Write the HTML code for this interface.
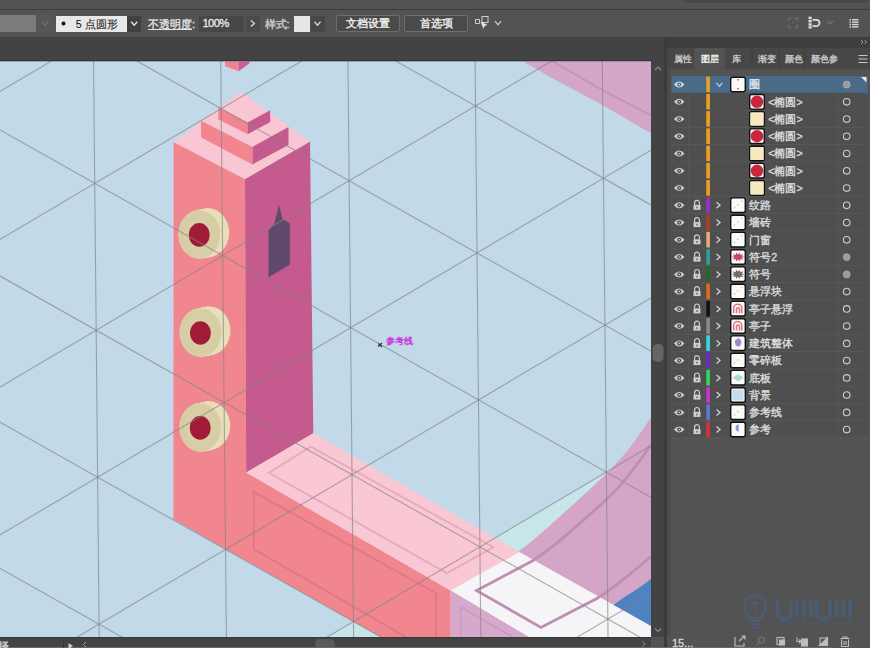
<!DOCTYPE html>
<html><head><meta charset="utf-8">
<style>
*{margin:0;padding:0;box-sizing:border-box}
html,body{width:870px;height:648px;overflow:hidden;background:#535353;font-family:"Liberation Sans",sans-serif;}
.a{position:absolute}
.t{position:absolute;white-space:nowrap;color:#e0e0e0;font-size:11px;line-height:1;-webkit-text-stroke:0.35px currentColor}
</style></head><body>
<div class="a" style="left:0;top:0;width:870px;height:9px;background:#535353"></div>
<div class="a" style="left:0;top:9px;width:870px;height:1px;background:#3c3c3c"></div>
<div class="a" style="left:0;top:10px;width:870px;height:27px;background:#535353"></div>
<div class="a" style="left:0;top:37px;width:870px;height:24px;background:#434343"></div>

<svg width="870" height="648" style="position:absolute;left:0;top:0">
<defs><clipPath id="cv"><rect x="0" y="61" width="651" height="576"/></clipPath></defs>
<g clip-path="url(#cv)">
<rect x="0" y="61" width="651" height="576" fill="#c1d9e8"/>
<polygon fill="#c6e6e9" points="327.4,637 651,445.7 651,637"/>
<path fill="#d4a5c7" d="M651,417.3 C640,434 635,441 628.4,449.4 C620,459 614,466 608.6,471.6 C597,483 586,493 574.1,503.7 C566,511 558,518 549.4,525.9 C540,534 530,543 519.8,550.6 L470,600 L470,637 L590,637 L613.6,604.7 C625,596 640,588 651,578.8 Z"/>
<path fill="#4f82c0" d="M613.6,604.7 C625,596 640,588 651,578.8 L651,637 L590,637 Z"/>
<path fill="#d4a5c7" d="M523.1,61.5 L555.6,79.9 L602.8,105.2 L650.4,133 L651,133 L651,61.5 Z"/>
<path fill="none" stroke="#c595b8" stroke-width="2" d="M552.8,61.5 L602.8,90.4 L651,115.4"/>
<polygon fill="#f3828f" points="224.9,61.5 225.2,66.3 238.7,71.2 238.7,61.5"/>
<polygon fill="#cf5c93" points="238.7,61.5 238.7,71.2 249.1,63.5 249.7,61.5"/>
<polygon fill="#f1868f" points="173.6,141.9 245,179 246.2,472.5 450.6,590.6 450.6,637 380.7,637 173.4,519.3"/>
<polygon fill="#c55a8f" points="245,179 310,141.5 313.3,433.2 246.2,472.5"/>
<polygon fill="#f9c6d3" points="173.6,141.9 240.8,91.7 310,141.5 245,179"/>
<polygon fill="#f1868f" points="201.1,120.7 201.1,137.4 252.5,164.4 252.5,146.9"/>
<polygon fill="#c55a8f" points="252.5,146.9 288.5,126.9 288.5,145 252.5,164.4"/>
<polygon fill="#f1868f" points="218.3,107.4 218.3,119.3 247.6,134.3 247.6,122.6"/>
<polygon fill="#c55a8f" points="247.6,122.6 270.2,110.2 270.2,122 247.6,134.3"/>
<ellipse cx="208.20" cy="232.60" rx="21.00" ry="24.30" fill="#e6dfb8"/><ellipse cx="207.45" cy="232.75" rx="21.00" ry="24.30" fill="#e6dfb8"/><ellipse cx="206.70" cy="232.90" rx="21.00" ry="24.30" fill="#e6dfb8"/><ellipse cx="205.95" cy="233.05" rx="21.00" ry="24.30" fill="#e6dfb8"/><ellipse cx="205.20" cy="233.20" rx="21.00" ry="24.30" fill="#e6dfb8"/><ellipse cx="204.45" cy="233.35" rx="21.00" ry="24.30" fill="#e6dfb8"/><ellipse cx="203.70" cy="233.50" rx="21.00" ry="24.30" fill="#e6dfb8"/><ellipse cx="202.95" cy="233.65" rx="21.00" ry="24.30" fill="#e6dfb8"/><ellipse cx="202.20" cy="233.80" rx="21.00" ry="24.30" fill="#e6dfb8"/><ellipse cx="201.45" cy="233.95" rx="21.00" ry="24.30" fill="#e6dfb8"/><ellipse cx="200.70" cy="234.10" rx="21.00" ry="24.30" fill="#e6dfb8"/><ellipse cx="199.95" cy="234.25" rx="21.00" ry="24.30" fill="#e6dfb8"/><ellipse cx="199.20" cy="234.40" rx="21.00" ry="24.30" fill="#d8cea6"/><ellipse cx="199.20" cy="234.40" rx="17.00" ry="20.30" fill="none" stroke="#cfc49c" stroke-width="1" opacity="0.35"/><ellipse cx="199.20" cy="234.90" rx="10.40" ry="11.80" fill="#9f1b37"/>
<ellipse cx="209.40" cy="330.70" rx="21.00" ry="24.30" fill="#e6dfb8"/><ellipse cx="208.65" cy="330.85" rx="21.00" ry="24.30" fill="#e6dfb8"/><ellipse cx="207.90" cy="331.00" rx="21.00" ry="24.30" fill="#e6dfb8"/><ellipse cx="207.15" cy="331.15" rx="21.00" ry="24.30" fill="#e6dfb8"/><ellipse cx="206.40" cy="331.30" rx="21.00" ry="24.30" fill="#e6dfb8"/><ellipse cx="205.65" cy="331.45" rx="21.00" ry="24.30" fill="#e6dfb8"/><ellipse cx="204.90" cy="331.60" rx="21.00" ry="24.30" fill="#e6dfb8"/><ellipse cx="204.15" cy="331.75" rx="21.00" ry="24.30" fill="#e6dfb8"/><ellipse cx="203.40" cy="331.90" rx="21.00" ry="24.30" fill="#e6dfb8"/><ellipse cx="202.65" cy="332.05" rx="21.00" ry="24.30" fill="#e6dfb8"/><ellipse cx="201.90" cy="332.20" rx="21.00" ry="24.30" fill="#e6dfb8"/><ellipse cx="201.15" cy="332.35" rx="21.00" ry="24.30" fill="#e6dfb8"/><ellipse cx="200.40" cy="332.50" rx="21.00" ry="24.30" fill="#d8cea6"/><ellipse cx="200.40" cy="332.50" rx="17.00" ry="20.30" fill="none" stroke="#cfc49c" stroke-width="1" opacity="0.35"/><ellipse cx="200.40" cy="333.00" rx="10.40" ry="11.80" fill="#9f1b37"/>
<ellipse cx="209.20" cy="425.60" rx="21.00" ry="24.30" fill="#e6dfb8"/><ellipse cx="208.45" cy="425.75" rx="21.00" ry="24.30" fill="#e6dfb8"/><ellipse cx="207.70" cy="425.90" rx="21.00" ry="24.30" fill="#e6dfb8"/><ellipse cx="206.95" cy="426.05" rx="21.00" ry="24.30" fill="#e6dfb8"/><ellipse cx="206.20" cy="426.20" rx="21.00" ry="24.30" fill="#e6dfb8"/><ellipse cx="205.45" cy="426.35" rx="21.00" ry="24.30" fill="#e6dfb8"/><ellipse cx="204.70" cy="426.50" rx="21.00" ry="24.30" fill="#e6dfb8"/><ellipse cx="203.95" cy="426.65" rx="21.00" ry="24.30" fill="#e6dfb8"/><ellipse cx="203.20" cy="426.80" rx="21.00" ry="24.30" fill="#e6dfb8"/><ellipse cx="202.45" cy="426.95" rx="21.00" ry="24.30" fill="#e6dfb8"/><ellipse cx="201.70" cy="427.10" rx="21.00" ry="24.30" fill="#e6dfb8"/><ellipse cx="200.95" cy="427.25" rx="21.00" ry="24.30" fill="#e6dfb8"/><ellipse cx="200.20" cy="427.40" rx="21.00" ry="24.30" fill="#d8cea6"/><ellipse cx="200.20" cy="427.40" rx="17.00" ry="20.30" fill="none" stroke="#cfc49c" stroke-width="1" opacity="0.35"/><ellipse cx="200.20" cy="427.90" rx="10.40" ry="11.80" fill="#9f1b37"/>
<polygon fill="#5f4a6b" points="279,204.7 282.4,219 289.8,223.2 289.8,264.8 268.5,277.2 268.5,230.4 274.4,223.2"/>
<polygon fill="#f9c8d4" points="246.2,472.5 313.3,433.2 519.5,552 450.6,590.6"/>
<polygon fill="none" stroke="#e6adbc" stroke-width="2" points="268.9,472.8 310.7,446.6 493.4,547.2 446.9,573.1"/>
<polyline fill="none" stroke="#dc7a86" stroke-width="2" points="406,637 253.8,549 253.8,492.1 435.9,593 435.9,637"/>
<polygon fill="#f5f4f7" points="450.6,590.6 519.5,552 651,626 651,637 528.7,637"/>
<polygon fill="#d6a9cc" points="450.6,590.6 528.7,637 450.6,637"/>
<polyline fill="none" stroke="#c898bd" stroke-width="1.5" points="460.7,637 460.7,607 513,637"/>
<path fill="none" stroke="#bf8db2" stroke-width="2.8" stroke-linejoin="miter" d="M651,556.5 C630,574 615,588 596,599 L540.9,627.4 L476.6,590.6 L533.6,560.2 C560,542 565,536 574,528.4 C595,510 612,496 623.5,481.5 C635,467 644,456 651,444.4"/>
<g stroke="#848484" stroke-opacity="0.68" stroke-width="1.1"><line x1="-164.0" y1="-255.0" x2="-153.9" y2="773.6"/><line x1="-36.9" y1="-256.3" x2="-26.7" y2="772.4"/><line x1="90.4" y1="-257.5" x2="100.5" y2="771.1"/><line x1="217.6" y1="-258.8" x2="227.7" y2="769.8"/><line x1="344.8" y1="-260.1" x2="354.9" y2="768.5"/><line x1="471.9" y1="-261.4" x2="482.1" y2="767.3"/><line x1="599.1" y1="-262.6" x2="609.3" y2="766.0"/><line x1="726.4" y1="-263.9" x2="736.5" y2="764.7"/><line x1="853.6" y1="-265.2" x2="863.7" y2="763.4"/><line x1="-300.7" y1="-1208.9" x2="978.6" y2="-486.9"/><line x1="-296.3" y1="-768.0" x2="968.4" y2="-1515.5"/><line x1="-299.2" y1="-1061.9" x2="980.0" y2="-339.9"/><line x1="-294.9" y1="-621.1" x2="969.9" y2="-1368.6"/><line x1="-297.8" y1="-915.0" x2="981.5" y2="-193.0"/><line x1="-293.4" y1="-474.1" x2="971.3" y2="-1221.6"/><line x1="-296.3" y1="-768.0" x2="982.9" y2="-46.1"/><line x1="-292.0" y1="-327.2" x2="972.8" y2="-1074.7"/><line x1="-294.9" y1="-621.1" x2="984.4" y2="100.9"/><line x1="-290.5" y1="-180.2" x2="974.2" y2="-927.8"/><line x1="-293.4" y1="-474.1" x2="985.8" y2="247.8"/><line x1="-289.1" y1="-33.3" x2="975.7" y2="-780.8"/><line x1="-292.0" y1="-327.2" x2="987.3" y2="394.8"/><line x1="-287.6" y1="113.7" x2="977.1" y2="-633.8"/><line x1="-290.5" y1="-180.2" x2="988.7" y2="541.8"/><line x1="-286.2" y1="260.6" x2="978.6" y2="-486.9"/><line x1="-289.1" y1="-33.3" x2="990.2" y2="688.7"/><line x1="-284.7" y1="407.6" x2="980.0" y2="-339.9"/><line x1="-287.6" y1="113.7" x2="991.6" y2="835.6"/><line x1="-283.3" y1="554.5" x2="981.5" y2="-193.0"/><line x1="-286.2" y1="260.6" x2="993.1" y2="982.6"/><line x1="-281.8" y1="701.5" x2="982.9" y2="-46.1"/><line x1="-284.7" y1="407.6" x2="994.5" y2="1129.5"/><line x1="-280.4" y1="848.4" x2="984.4" y2="100.9"/><line x1="-283.3" y1="554.5" x2="996.0" y2="1276.5"/><line x1="-278.9" y1="995.3" x2="985.8" y2="247.8"/><line x1="-281.8" y1="701.5" x2="997.4" y2="1423.4"/><line x1="-277.5" y1="1142.3" x2="987.3" y2="394.8"/><line x1="-280.4" y1="848.4" x2="998.9" y2="1570.4"/><line x1="-276.0" y1="1289.2" x2="988.7" y2="541.8"/><line x1="-278.9" y1="995.3" x2="1000.3" y2="1717.3"/><line x1="-274.6" y1="1436.2" x2="990.2" y2="688.7"/><line x1="-277.5" y1="1142.3" x2="1001.8" y2="1864.3"/><line x1="-273.1" y1="1583.1" x2="991.6" y2="835.6"/><line x1="-276.0" y1="1289.2" x2="1003.2" y2="2011.2"/><line x1="-271.7" y1="1730.1" x2="993.1" y2="982.6"/></g>
</g>
<rect x="0" y="60.3" width="652" height="1" fill="#382e33"/>
<rect x="651" y="60.3" width="1" height="577" fill="#382e33"/>
<text x="385.5" y="343.5" font-size="9.2" font-weight="bold" fill="#cf35dc" font-family="Liberation Sans, sans-serif">参考线</text>
<path d="M378.5,343.5 L382,347 M378,346.5 L382,343" stroke="#333" stroke-width="1.3"/>
</svg>


<div class="a" style="left:0;top:15px;width:36px;height:17px;background:#7c7c7c"></div>
<div class="a" style="left:36px;top:15px;width:19px;height:17px;background:#575757"></div>
<div class="a" style="left:56px;top:15.5px;width:71px;height:16.5px;background:#e8e8e8"></div>
<div class="a" style="left:127.4px;top:15.5px;width:13.6px;height:16.5px;background:#404040"></div>
<div class="a" style="left:199.2px;top:15.5px;width:45px;height:16.5px;background:#474747"></div>
<div class="a" style="left:246px;top:15.5px;width:13.5px;height:16.5px;background:#4a4a4a"></div>
<div class="a" style="left:294px;top:15.5px;width:16.2px;height:16.5px;background:#e6e6e6"></div>
<div class="a" style="left:310.5px;top:15.5px;width:14px;height:16.5px;background:#474747"></div>
<div class="a" style="left:335.5px;top:14.8px;width:64px;height:17px;border:1px solid #6e6e6e;border-radius:2px;background:#4a4a4a"></div>
<div class="a" style="left:404.3px;top:14.8px;width:63.3px;height:17px;border:1px solid #6e6e6e;border-radius:2px;background:#4a4a4a"></div>
<svg width="870" height="40" style="position:absolute;left:0;top:0">
<path d="M42.0,21.8 L45.0,25.2 L48.0,21.8" fill="none" stroke="#6e6e6e" stroke-width="1.3"/>
<circle cx="63.5" cy="23.5" r="2" fill="#111"/>
<path d="M131.2,21.8 L134.2,25.2 L137.2,21.8" fill="none" stroke="#e8e8e8" stroke-width="1.3"/>
<path d="M250.9,20.5 L254.4,23.5 L250.9,26.5" fill="none" stroke="#d8d8d8" stroke-width="1.3"/>
<path d="M314.5,21.8 L317.5,25.2 L320.5,21.8" fill="none" stroke="#d8d8d8" stroke-width="1.3"/>
<rect x="482" y="16.5" width="6" height="6" fill="none" stroke="#cfcfcf" stroke-width="1"/>
<path d="M475.5,19.5 h4 v4 h-4 z" fill="none" stroke="#cfcfcf" stroke-width="1"/>
<path d="M480.5,21.5 l7,3.5 l-3,1 l-1,3 z" fill="#e6e6e6"/>
<path d="M495.0,21.2 L498.0,24.8 L501.0,21.2" fill="none" stroke="#cfcfcf" stroke-width="1.3"/>
<path d="M788.5,21 v-3 h3 M794.5,18 h3 v3 M797.5,24.5 v3 h-3 M791.5,27.5 h-3 v-3" fill="none" stroke="#6a6a6a" stroke-width="1.6"/><rect x="792" y="21.5" width="2" height="2" fill="#606060"/>
<g fill="#e0e0e0"><rect x="808.5" y="16.7" width="3.2" height="2.4"/><rect x="808.5" y="20" width="3.2" height="2.4"/><rect x="808.5" y="23.3" width="3.2" height="2.4"/><rect x="808.5" y="26.3" width="3.2" height="2.2"/></g>
<path d="M812.5,19.8 h3.8 a3.2,3.2 0 0 1 0,6.4 h-3.8" fill="none" stroke="#e0e0e0" stroke-width="1.7"/>
<path d="M827.0,20.8 L830.0,24.2 L833.0,20.8" fill="none" stroke="#707070" stroke-width="1.3"/>
<g fill="#d8d8d8"><rect x="849.5" y="19" width="1.5" height="1.4"/><rect x="852" y="19" width="6.5" height="1.4"/><rect x="849.5" y="21.4" width="1.5" height="1.4"/><rect x="852" y="21.4" width="6.5" height="1.4"/><rect x="849.5" y="23.8" width="1.5" height="1.4"/><rect x="852" y="23.8" width="6.5" height="1.4"/><rect x="849.5" y="26.2" width="1.5" height="1.4"/><rect x="852" y="26.2" width="6.5" height="1.4"/></g>
</svg>
<div class="t" style="left:75.8px;top:18.6px;font-size:10.6px;color:#1a1a1a;-webkit-text-stroke:0.1px #1a1a1a">5 点圆形</div>
<div class="t" style="left:148px;top:18.5px;font-size:11px;color:#e2e2e2"><span style="text-decoration:underline">不透明度</span>:</div>
<div class="t" style="left:202.5px;top:17.5px;font-size:11.3px;letter-spacing:-0.7px;color:#e6e6e6">100%</div>
<div class="t" style="left:264.5px;top:18.5px;font-size:11px;color:#cfcfcf">样式:</div>
<div class="t" style="left:346px;top:18.3px;font-size:10.5px;color:#f0f0f0">文档设置</div>
<div class="t" style="left:419.5px;top:18.3px;font-size:10.5px;color:#f0f0f0">首选项</div>


<svg width="870" height="648" style="position:absolute;left:0;top:0">
<rect x="651" y="61" width="13" height="576" fill="#434343"/>
<rect x="652.5" y="344" width="11" height="18" rx="5" fill="#656565"/>
<path d="M655,70 L658,67 L661,70" fill="none" stroke="#8a8a8a" stroke-width="1.2"/>
<rect x="664" y="37" width="3" height="611" fill="#3b3b3b"/>
<rect x="667" y="37" width="203" height="11" fill="#3e3e3e"/>
<rect x="667" y="48" width="203" height="21.5" fill="#474747"/>
<rect x="694.2" y="48" width="31" height="21.5" fill="#535353"/>
<rect x="751.5" y="48" width="1" height="21.5" fill="#3f3f3f"/>
<rect x="778.5" y="48" width="1" height="21.5" fill="#3f3f3f"/>
<rect x="804.5" y="48" width="1" height="21.5" fill="#3f3f3f"/>
<rect x="667" y="69.5" width="203" height="578.5" fill="#535353"/>
<rect x="667" y="69.5" width="3.5" height="565" fill="#4a4a4a"/>
<rect x="684" y="0" width="184" height="2.8" fill="#484848"/>
<path d="M861,40 l2,2 l-2,2 M864.5,40 l2,2 l-2,2" fill="none" stroke="#aaa" stroke-width="0.9"/>
<path d="M858.5,55.5 h9 M858.5,59 h9 M858.5,62.5 h9" stroke="#c8c8c8" stroke-width="1.2"/>
<rect x="671.5" y="76.00" width="196" height="16.6" fill="#4a6a89"/><polygon points="861,77.0 866.5,77.0 866.5,82.5" fill="#e8e8e8"/><path d="M673.9,84.6 Q679.2,78.6 684.5,84.6 Q679.2,90.6 673.9,84.6 Z" fill="#d8dde2"/><circle cx="679.2" cy="84.6" r="2.1" fill="#4a6a89"/><circle cx="679.2" cy="84.6" r="0.8" fill="#d8dde2"/><rect x="706.3" y="76.60" width="3.6" height="15.6" fill="#f0a020"/><path d="M716.4,82.8 L719.4,86.3 L722.4,82.8" fill="none" stroke="#c8d4e0" stroke-width="1.3"/><rect x="730.7" y="77.2" width="14.6" height="14.6" rx="2" fill="#fbfaf8" stroke="#111" stroke-width="1.4"/><rect x="737.4" y="79.0" width="1.2" height="1.5" fill="#555"/><rect x="737.4" y="88.0" width="1.2" height="1.5" fill="#555"/><circle cx="846.7" cy="84.6" r="3.4" fill="#9a9a9a" stroke="#b5b5b5" stroke-width="0.8"/><rect x="671.5" y="93.25" width="196" height="16.6" fill="#4f4f4f"/><rect x="671.5" y="109.85" width="196" height="0.9" fill="#5b5b5b"/><rect x="688.3" y="93.25" width="0.8" height="16.6" fill="#585858"/><rect x="838.5" y="93.25" width="0.8" height="16.6" fill="#585858"/><path d="M673.9,101.8 Q679.2,95.8 684.5,101.8 Q679.2,107.8 673.9,101.8 Z" fill="#cfcfcf"/><circle cx="679.2" cy="101.8" r="2.1" fill="#4f4f4f"/><circle cx="679.2" cy="101.8" r="0.8" fill="#cfcfcf"/><rect x="706.3" y="93.85" width="3.6" height="15.6" fill="#f0a020"/><rect x="749.7" y="94.5" width="14.6" height="14.6" rx="2" fill="#fbfaf8" stroke="#111" stroke-width="1.4"/><circle cx="757.0" cy="101.8" r="6.2" fill="#c8253f"/><circle cx="846.7" cy="101.8" r="3.3" fill="none" stroke="#cdcdcd" stroke-width="1.1"/><rect x="671.5" y="110.50" width="196" height="16.6" fill="#4f4f4f"/><rect x="671.5" y="127.10" width="196" height="0.9" fill="#5b5b5b"/><rect x="688.3" y="110.50" width="0.8" height="16.6" fill="#585858"/><rect x="838.5" y="110.50" width="0.8" height="16.6" fill="#585858"/><path d="M673.9,119.1 Q679.2,113.1 684.5,119.1 Q679.2,125.1 673.9,119.1 Z" fill="#cfcfcf"/><circle cx="679.2" cy="119.1" r="2.1" fill="#4f4f4f"/><circle cx="679.2" cy="119.1" r="0.8" fill="#cfcfcf"/><rect x="706.3" y="111.10" width="3.6" height="15.6" fill="#f0a020"/><rect x="749.7" y="111.7" width="14.6" height="14.6" rx="2" fill="#fbfaf8" stroke="#111" stroke-width="1.4"/><rect x="750.5" y="112.5" width="13" height="13" fill="#f8eabf"/><circle cx="846.7" cy="119.1" r="3.3" fill="none" stroke="#cdcdcd" stroke-width="1.1"/><rect x="671.5" y="127.75" width="196" height="16.6" fill="#4f4f4f"/><rect x="671.5" y="144.35" width="196" height="0.9" fill="#5b5b5b"/><rect x="688.3" y="127.75" width="0.8" height="16.6" fill="#585858"/><rect x="838.5" y="127.75" width="0.8" height="16.6" fill="#585858"/><path d="M673.9,136.3 Q679.2,130.3 684.5,136.3 Q679.2,142.3 673.9,136.3 Z" fill="#cfcfcf"/><circle cx="679.2" cy="136.3" r="2.1" fill="#4f4f4f"/><circle cx="679.2" cy="136.3" r="0.8" fill="#cfcfcf"/><rect x="706.3" y="128.35" width="3.6" height="15.6" fill="#f0a020"/><rect x="749.7" y="128.9" width="14.6" height="14.6" rx="2" fill="#fbfaf8" stroke="#111" stroke-width="1.4"/><circle cx="757.0" cy="136.2" r="6.2" fill="#c8253f"/><circle cx="846.7" cy="136.3" r="3.3" fill="none" stroke="#cdcdcd" stroke-width="1.1"/><rect x="671.5" y="145.00" width="196" height="16.6" fill="#4f4f4f"/><rect x="671.5" y="161.60" width="196" height="0.9" fill="#5b5b5b"/><rect x="688.3" y="145.00" width="0.8" height="16.6" fill="#585858"/><rect x="838.5" y="145.00" width="0.8" height="16.6" fill="#585858"/><path d="M673.9,153.6 Q679.2,147.6 684.5,153.6 Q679.2,159.6 673.9,153.6 Z" fill="#cfcfcf"/><circle cx="679.2" cy="153.6" r="2.1" fill="#4f4f4f"/><circle cx="679.2" cy="153.6" r="0.8" fill="#cfcfcf"/><rect x="706.3" y="145.60" width="3.6" height="15.6" fill="#f0a020"/><rect x="749.7" y="146.2" width="14.6" height="14.6" rx="2" fill="#fbfaf8" stroke="#111" stroke-width="1.4"/><rect x="750.5" y="147.0" width="13" height="13" fill="#f8eabf"/><circle cx="846.7" cy="153.6" r="3.3" fill="none" stroke="#cdcdcd" stroke-width="1.1"/><rect x="671.5" y="162.25" width="196" height="16.6" fill="#4f4f4f"/><rect x="671.5" y="178.85" width="196" height="0.9" fill="#5b5b5b"/><rect x="688.3" y="162.25" width="0.8" height="16.6" fill="#585858"/><rect x="838.5" y="162.25" width="0.8" height="16.6" fill="#585858"/><path d="M673.9,170.8 Q679.2,164.8 684.5,170.8 Q679.2,176.8 673.9,170.8 Z" fill="#cfcfcf"/><circle cx="679.2" cy="170.8" r="2.1" fill="#4f4f4f"/><circle cx="679.2" cy="170.8" r="0.8" fill="#cfcfcf"/><rect x="706.3" y="162.85" width="3.6" height="15.6" fill="#f0a020"/><rect x="749.7" y="163.4" width="14.6" height="14.6" rx="2" fill="#fbfaf8" stroke="#111" stroke-width="1.4"/><circle cx="757.0" cy="170.8" r="6.2" fill="#c8253f"/><circle cx="846.7" cy="170.8" r="3.3" fill="none" stroke="#cdcdcd" stroke-width="1.1"/><rect x="671.5" y="179.50" width="196" height="16.6" fill="#4f4f4f"/><rect x="671.5" y="196.10" width="196" height="0.9" fill="#5b5b5b"/><rect x="688.3" y="179.50" width="0.8" height="16.6" fill="#585858"/><rect x="838.5" y="179.50" width="0.8" height="16.6" fill="#585858"/><path d="M673.9,188.1 Q679.2,182.1 684.5,188.1 Q679.2,194.1 673.9,188.1 Z" fill="#cfcfcf"/><circle cx="679.2" cy="188.1" r="2.1" fill="#4f4f4f"/><circle cx="679.2" cy="188.1" r="0.8" fill="#cfcfcf"/><rect x="706.3" y="180.10" width="3.6" height="15.6" fill="#f0a020"/><rect x="749.7" y="180.7" width="14.6" height="14.6" rx="2" fill="#fbfaf8" stroke="#111" stroke-width="1.4"/><rect x="750.5" y="181.5" width="13" height="13" fill="#f8eabf"/><circle cx="846.7" cy="188.1" r="3.3" fill="none" stroke="#cdcdcd" stroke-width="1.1"/><rect x="671.5" y="196.75" width="196" height="16.6" fill="#4f4f4f"/><rect x="671.5" y="213.35" width="196" height="0.9" fill="#5b5b5b"/><rect x="688.3" y="196.75" width="0.8" height="16.6" fill="#585858"/><rect x="838.5" y="196.75" width="0.8" height="16.6" fill="#585858"/><path d="M673.9,205.3 Q679.2,199.3 684.5,205.3 Q679.2,211.3 673.9,205.3 Z" fill="#cfcfcf"/><circle cx="679.2" cy="205.3" r="2.1" fill="#4f4f4f"/><circle cx="679.2" cy="205.3" r="0.8" fill="#cfcfcf"/><path d="M694.6,204.8 v-2 a2.4,2.4 0 0 1 4.8,0 v2" fill="none" stroke="#cfcfcf" stroke-width="1.2"/><rect x="693.5" y="204.8" width="7" height="5" fill="#cfcfcf"/><rect x="696.4" y="206.5" width="1.2" height="1.8" fill="#535353"/><rect x="706.3" y="197.35" width="3.6" height="15.6" fill="#9a2ed0"/><path d="M716.5,202.3 L720.0,205.3 L716.5,208.3" fill="none" stroke="#d0d0d0" stroke-width="1.3"/><rect x="730.7" y="197.9" width="14.6" height="14.6" rx="2" fill="#fbfaf8" stroke="#111" stroke-width="1.4"/><g fill="#b8b8b8"><circle cx="734.7" cy="207.8" r="0.7"/><circle cx="737.7" cy="204.8" r="0.7"/><circle cx="741.7" cy="201.2" r="0.6"/></g><circle cx="846.7" cy="205.3" r="3.3" fill="none" stroke="#cdcdcd" stroke-width="1.1"/><rect x="671.5" y="214.00" width="196" height="16.6" fill="#4f4f4f"/><rect x="671.5" y="230.60" width="196" height="0.9" fill="#5b5b5b"/><rect x="688.3" y="214.00" width="0.8" height="16.6" fill="#585858"/><rect x="838.5" y="214.00" width="0.8" height="16.6" fill="#585858"/><path d="M673.9,222.6 Q679.2,216.6 684.5,222.6 Q679.2,228.6 673.9,222.6 Z" fill="#cfcfcf"/><circle cx="679.2" cy="222.6" r="2.1" fill="#4f4f4f"/><circle cx="679.2" cy="222.6" r="0.8" fill="#cfcfcf"/><path d="M694.6,222.1 v-2 a2.4,2.4 0 0 1 4.8,0 v2" fill="none" stroke="#cfcfcf" stroke-width="1.2"/><rect x="693.5" y="222.1" width="7" height="5" fill="#cfcfcf"/><rect x="696.4" y="223.8" width="1.2" height="1.8" fill="#535353"/><rect x="706.3" y="214.60" width="3.6" height="15.6" fill="#a8402a"/><path d="M716.5,219.6 L720.0,222.6 L716.5,225.6" fill="none" stroke="#d0d0d0" stroke-width="1.3"/><rect x="730.7" y="215.2" width="14.6" height="14.6" rx="2" fill="#fbfaf8" stroke="#111" stroke-width="1.4"/><g fill="#b8b8b8"><circle cx="734.7" cy="225.0" r="0.7"/><circle cx="737.7" cy="222.0" r="0.7"/><circle cx="741.7" cy="218.5" r="0.6"/></g><circle cx="846.7" cy="222.6" r="3.3" fill="none" stroke="#cdcdcd" stroke-width="1.1"/><rect x="671.5" y="231.25" width="196" height="16.6" fill="#4f4f4f"/><rect x="671.5" y="247.85" width="196" height="0.9" fill="#5b5b5b"/><rect x="688.3" y="231.25" width="0.8" height="16.6" fill="#585858"/><rect x="838.5" y="231.25" width="0.8" height="16.6" fill="#585858"/><path d="M673.9,239.8 Q679.2,233.8 684.5,239.8 Q679.2,245.8 673.9,239.8 Z" fill="#cfcfcf"/><circle cx="679.2" cy="239.8" r="2.1" fill="#4f4f4f"/><circle cx="679.2" cy="239.8" r="0.8" fill="#cfcfcf"/><path d="M694.6,239.3 v-2 a2.4,2.4 0 0 1 4.8,0 v2" fill="none" stroke="#cfcfcf" stroke-width="1.2"/><rect x="693.5" y="239.3" width="7" height="5" fill="#cfcfcf"/><rect x="696.4" y="241.0" width="1.2" height="1.8" fill="#535353"/><rect x="706.3" y="231.85" width="3.6" height="15.6" fill="#e8a878"/><path d="M716.5,236.8 L720.0,239.8 L716.5,242.8" fill="none" stroke="#d0d0d0" stroke-width="1.3"/><rect x="730.7" y="232.4" width="14.6" height="14.6" rx="2" fill="#fbfaf8" stroke="#111" stroke-width="1.4"/><g fill="#b8b8b8"><circle cx="734.7" cy="242.2" r="0.7"/><circle cx="737.7" cy="239.2" r="0.7"/><circle cx="741.7" cy="235.8" r="0.6"/></g><circle cx="846.7" cy="239.8" r="3.3" fill="none" stroke="#cdcdcd" stroke-width="1.1"/><rect x="671.5" y="248.50" width="196" height="16.6" fill="#4f4f4f"/><rect x="671.5" y="265.10" width="196" height="0.9" fill="#5b5b5b"/><rect x="688.3" y="248.50" width="0.8" height="16.6" fill="#585858"/><rect x="838.5" y="248.50" width="0.8" height="16.6" fill="#585858"/><path d="M673.9,257.1 Q679.2,251.1 684.5,257.1 Q679.2,263.1 673.9,257.1 Z" fill="#cfcfcf"/><circle cx="679.2" cy="257.1" r="2.1" fill="#4f4f4f"/><circle cx="679.2" cy="257.1" r="0.8" fill="#cfcfcf"/><path d="M694.6,256.6 v-2 a2.4,2.4 0 0 1 4.8,0 v2" fill="none" stroke="#cfcfcf" stroke-width="1.2"/><rect x="693.5" y="256.6" width="7" height="5" fill="#cfcfcf"/><rect x="696.4" y="258.3" width="1.2" height="1.8" fill="#535353"/><rect x="706.3" y="249.10" width="3.6" height="15.6" fill="#2aa0a0"/><path d="M716.5,254.1 L720.0,257.1 L716.5,260.1" fill="none" stroke="#d0d0d0" stroke-width="1.3"/><rect x="730.7" y="249.7" width="14.6" height="14.6" rx="2" fill="#fbfaf8" stroke="#111" stroke-width="1.4"/><polygon points="744.8,257.0 741.6,257.8 743.5,259.8 740.2,259.1 740.1,261.6 738.0,259.6 735.9,261.6 735.8,259.1 732.5,259.8 734.4,257.8 731.2,257.0 734.4,256.2 732.5,254.2 735.8,254.9 735.9,252.4 738.0,254.4 740.1,252.4 740.2,254.9 743.5,254.2 741.6,256.2" fill="#c8406e"/><circle cx="846.7" cy="257.1" r="3.4" fill="#9a9a9a" stroke="#b5b5b5" stroke-width="0.8"/><rect x="671.5" y="265.75" width="196" height="16.6" fill="#4f4f4f"/><rect x="671.5" y="282.35" width="196" height="0.9" fill="#5b5b5b"/><rect x="688.3" y="265.75" width="0.8" height="16.6" fill="#585858"/><rect x="838.5" y="265.75" width="0.8" height="16.6" fill="#585858"/><path d="M673.9,274.4 Q679.2,268.4 684.5,274.4 Q679.2,280.4 673.9,274.4 Z" fill="#cfcfcf"/><circle cx="679.2" cy="274.4" r="2.1" fill="#4f4f4f"/><circle cx="679.2" cy="274.4" r="0.8" fill="#cfcfcf"/><path d="M694.6,273.9 v-2 a2.4,2.4 0 0 1 4.8,0 v2" fill="none" stroke="#cfcfcf" stroke-width="1.2"/><rect x="693.5" y="273.9" width="7" height="5" fill="#cfcfcf"/><rect x="696.4" y="275.6" width="1.2" height="1.8" fill="#535353"/><rect x="706.3" y="266.35" width="3.6" height="15.6" fill="#1f6a2a"/><path d="M716.5,271.4 L720.0,274.4 L716.5,277.4" fill="none" stroke="#d0d0d0" stroke-width="1.3"/><rect x="730.7" y="266.9" width="14.6" height="14.6" rx="2" fill="#fbfaf8" stroke="#111" stroke-width="1.4"/><polygon points="744.8,274.2 741.6,275.1 743.5,277.1 740.2,276.4 740.1,278.8 738.0,276.9 735.9,278.8 735.8,276.4 732.5,277.1 734.4,275.1 731.2,274.2 734.4,273.4 732.5,271.4 735.8,272.1 735.9,269.7 738.0,271.6 740.1,269.7 740.2,272.1 743.5,271.4 741.6,273.4" fill="#6e6e6e"/><circle cx="846.7" cy="274.4" r="3.4" fill="#9a9a9a" stroke="#b5b5b5" stroke-width="0.8"/><rect x="671.5" y="283.00" width="196" height="16.6" fill="#4f4f4f"/><rect x="671.5" y="299.60" width="196" height="0.9" fill="#5b5b5b"/><rect x="688.3" y="283.00" width="0.8" height="16.6" fill="#585858"/><rect x="838.5" y="283.00" width="0.8" height="16.6" fill="#585858"/><path d="M673.9,291.6 Q679.2,285.6 684.5,291.6 Q679.2,297.6 673.9,291.6 Z" fill="#cfcfcf"/><circle cx="679.2" cy="291.6" r="2.1" fill="#4f4f4f"/><circle cx="679.2" cy="291.6" r="0.8" fill="#cfcfcf"/><path d="M694.6,291.1 v-2 a2.4,2.4 0 0 1 4.8,0 v2" fill="none" stroke="#cfcfcf" stroke-width="1.2"/><rect x="693.5" y="291.1" width="7" height="5" fill="#cfcfcf"/><rect x="696.4" y="292.8" width="1.2" height="1.8" fill="#535353"/><rect x="706.3" y="283.60" width="3.6" height="15.6" fill="#e06a20"/><path d="M716.5,288.6 L720.0,291.6 L716.5,294.6" fill="none" stroke="#d0d0d0" stroke-width="1.3"/><rect x="730.7" y="284.2" width="14.6" height="14.6" rx="2" fill="#fbfaf8" stroke="#111" stroke-width="1.4"/><g fill="#b8b8b8"><circle cx="734.7" cy="294.0" r="0.7"/><circle cx="737.7" cy="291.0" r="0.7"/><circle cx="741.7" cy="287.5" r="0.6"/></g><circle cx="846.7" cy="291.6" r="3.3" fill="none" stroke="#cdcdcd" stroke-width="1.1"/><rect x="671.5" y="300.25" width="196" height="16.6" fill="#4f4f4f"/><rect x="671.5" y="316.85" width="196" height="0.9" fill="#5b5b5b"/><rect x="688.3" y="300.25" width="0.8" height="16.6" fill="#585858"/><rect x="838.5" y="300.25" width="0.8" height="16.6" fill="#585858"/><path d="M673.9,308.9 Q679.2,302.9 684.5,308.9 Q679.2,314.9 673.9,308.9 Z" fill="#cfcfcf"/><circle cx="679.2" cy="308.9" r="2.1" fill="#4f4f4f"/><circle cx="679.2" cy="308.9" r="0.8" fill="#cfcfcf"/><path d="M694.6,308.4 v-2 a2.4,2.4 0 0 1 4.8,0 v2" fill="none" stroke="#cfcfcf" stroke-width="1.2"/><rect x="693.5" y="308.4" width="7" height="5" fill="#cfcfcf"/><rect x="696.4" y="310.1" width="1.2" height="1.8" fill="#535353"/><rect x="706.3" y="300.85" width="3.6" height="15.6" fill="#111111"/><path d="M716.5,305.9 L720.0,308.9 L716.5,311.9" fill="none" stroke="#d0d0d0" stroke-width="1.3"/><rect x="730.7" y="301.4" width="14.6" height="14.6" rx="2" fill="#fbfaf8" stroke="#111" stroke-width="1.4"/><path d="M733.7,313.2 v-5 a4,4 0 0 1 8,0 v5 M736.5,313.2 v-4 a1.5,1.5 0 0 1 3,0 v4" fill="none" stroke="#e07080" stroke-width="1.5"/><circle cx="846.7" cy="308.9" r="3.3" fill="none" stroke="#cdcdcd" stroke-width="1.1"/><rect x="671.5" y="317.50" width="196" height="16.6" fill="#4f4f4f"/><rect x="671.5" y="334.10" width="196" height="0.9" fill="#5b5b5b"/><rect x="688.3" y="317.50" width="0.8" height="16.6" fill="#585858"/><rect x="838.5" y="317.50" width="0.8" height="16.6" fill="#585858"/><path d="M673.9,326.1 Q679.2,320.1 684.5,326.1 Q679.2,332.1 673.9,326.1 Z" fill="#cfcfcf"/><circle cx="679.2" cy="326.1" r="2.1" fill="#4f4f4f"/><circle cx="679.2" cy="326.1" r="0.8" fill="#cfcfcf"/><path d="M694.6,325.6 v-2 a2.4,2.4 0 0 1 4.8,0 v2" fill="none" stroke="#cfcfcf" stroke-width="1.2"/><rect x="693.5" y="325.6" width="7" height="5" fill="#cfcfcf"/><rect x="696.4" y="327.3" width="1.2" height="1.8" fill="#535353"/><rect x="706.3" y="318.10" width="3.6" height="15.6" fill="#8a8a8a"/><path d="M716.5,323.1 L720.0,326.1 L716.5,329.1" fill="none" stroke="#d0d0d0" stroke-width="1.3"/><rect x="730.7" y="318.7" width="14.6" height="14.6" rx="2" fill="#fbfaf8" stroke="#111" stroke-width="1.4"/><path d="M733.7,330.5 v-5 a4,4 0 0 1 8,0 v5 M736.5,330.5 v-4 a1.5,1.5 0 0 1 3,0 v4" fill="none" stroke="#e07080" stroke-width="1.5"/><circle cx="846.7" cy="326.1" r="3.3" fill="none" stroke="#cdcdcd" stroke-width="1.1"/><rect x="671.5" y="334.75" width="196" height="16.6" fill="#4f4f4f"/><rect x="671.5" y="351.35" width="196" height="0.9" fill="#5b5b5b"/><rect x="688.3" y="334.75" width="0.8" height="16.6" fill="#585858"/><rect x="838.5" y="334.75" width="0.8" height="16.6" fill="#585858"/><path d="M673.9,343.4 Q679.2,337.4 684.5,343.4 Q679.2,349.4 673.9,343.4 Z" fill="#cfcfcf"/><circle cx="679.2" cy="343.4" r="2.1" fill="#4f4f4f"/><circle cx="679.2" cy="343.4" r="0.8" fill="#cfcfcf"/><path d="M694.6,342.9 v-2 a2.4,2.4 0 0 1 4.8,0 v2" fill="none" stroke="#cfcfcf" stroke-width="1.2"/><rect x="693.5" y="342.9" width="7" height="5" fill="#cfcfcf"/><rect x="696.4" y="344.6" width="1.2" height="1.8" fill="#535353"/><rect x="706.3" y="335.35" width="3.6" height="15.6" fill="#30d8e8"/><path d="M716.5,340.4 L720.0,343.4 L716.5,346.4" fill="none" stroke="#d0d0d0" stroke-width="1.3"/><rect x="730.7" y="335.9" width="14.6" height="14.6" rx="2" fill="#fbfaf8" stroke="#111" stroke-width="1.4"/><path d="M734.7,340.8 l4,-3 l3,4 l-2,5 l-4,-1 z" fill="#a088c8"/><circle cx="846.7" cy="343.4" r="3.3" fill="none" stroke="#cdcdcd" stroke-width="1.1"/><rect x="671.5" y="352.00" width="196" height="16.6" fill="#4f4f4f"/><rect x="671.5" y="368.60" width="196" height="0.9" fill="#5b5b5b"/><rect x="688.3" y="352.00" width="0.8" height="16.6" fill="#585858"/><rect x="838.5" y="352.00" width="0.8" height="16.6" fill="#585858"/><path d="M673.9,360.6 Q679.2,354.6 684.5,360.6 Q679.2,366.6 673.9,360.6 Z" fill="#cfcfcf"/><circle cx="679.2" cy="360.6" r="2.1" fill="#4f4f4f"/><circle cx="679.2" cy="360.6" r="0.8" fill="#cfcfcf"/><path d="M694.6,360.1 v-2 a2.4,2.4 0 0 1 4.8,0 v2" fill="none" stroke="#cfcfcf" stroke-width="1.2"/><rect x="693.5" y="360.1" width="7" height="5" fill="#cfcfcf"/><rect x="696.4" y="361.8" width="1.2" height="1.8" fill="#535353"/><rect x="706.3" y="352.60" width="3.6" height="15.6" fill="#6a28c8"/><path d="M716.5,357.6 L720.0,360.6 L716.5,363.6" fill="none" stroke="#d0d0d0" stroke-width="1.3"/><rect x="730.7" y="353.2" width="14.6" height="14.6" rx="2" fill="#fbfaf8" stroke="#111" stroke-width="1.4"/><g fill="#b8b8b8"><circle cx="734.7" cy="363.0" r="0.7"/><circle cx="737.7" cy="360.0" r="0.7"/><circle cx="741.7" cy="356.5" r="0.6"/></g><circle cx="846.7" cy="360.6" r="3.3" fill="none" stroke="#cdcdcd" stroke-width="1.1"/><rect x="671.5" y="369.25" width="196" height="16.6" fill="#4f4f4f"/><rect x="671.5" y="385.85" width="196" height="0.9" fill="#5b5b5b"/><rect x="688.3" y="369.25" width="0.8" height="16.6" fill="#585858"/><rect x="838.5" y="369.25" width="0.8" height="16.6" fill="#585858"/><path d="M673.9,377.9 Q679.2,371.9 684.5,377.9 Q679.2,383.9 673.9,377.9 Z" fill="#cfcfcf"/><circle cx="679.2" cy="377.9" r="2.1" fill="#4f4f4f"/><circle cx="679.2" cy="377.9" r="0.8" fill="#cfcfcf"/><path d="M694.6,377.4 v-2 a2.4,2.4 0 0 1 4.8,0 v2" fill="none" stroke="#cfcfcf" stroke-width="1.2"/><rect x="693.5" y="377.4" width="7" height="5" fill="#cfcfcf"/><rect x="696.4" y="379.1" width="1.2" height="1.8" fill="#535353"/><rect x="706.3" y="369.85" width="3.6" height="15.6" fill="#30d860"/><path d="M716.5,374.9 L720.0,377.9 L716.5,380.9" fill="none" stroke="#d0d0d0" stroke-width="1.3"/><rect x="730.7" y="370.4" width="14.6" height="14.6" rx="2" fill="#fbfaf8" stroke="#111" stroke-width="1.4"/><polygon points="732.2,377.8 738.0,374.2 743.7,377.8 738.0,381.2" fill="#a8dcd8"/><circle cx="846.7" cy="377.9" r="3.3" fill="none" stroke="#cdcdcd" stroke-width="1.1"/><rect x="671.5" y="386.50" width="196" height="16.6" fill="#4f4f4f"/><rect x="671.5" y="403.10" width="196" height="0.9" fill="#5b5b5b"/><rect x="688.3" y="386.50" width="0.8" height="16.6" fill="#585858"/><rect x="838.5" y="386.50" width="0.8" height="16.6" fill="#585858"/><path d="M673.9,395.1 Q679.2,389.1 684.5,395.1 Q679.2,401.1 673.9,395.1 Z" fill="#cfcfcf"/><circle cx="679.2" cy="395.1" r="2.1" fill="#4f4f4f"/><circle cx="679.2" cy="395.1" r="0.8" fill="#cfcfcf"/><path d="M694.6,394.6 v-2 a2.4,2.4 0 0 1 4.8,0 v2" fill="none" stroke="#cfcfcf" stroke-width="1.2"/><rect x="693.5" y="394.6" width="7" height="5" fill="#cfcfcf"/><rect x="696.4" y="396.3" width="1.2" height="1.8" fill="#535353"/><rect x="706.3" y="387.10" width="3.6" height="15.6" fill="#d030d0"/><path d="M716.5,392.1 L720.0,395.1 L716.5,398.1" fill="none" stroke="#d0d0d0" stroke-width="1.3"/><rect x="730.7" y="387.7" width="14.6" height="14.6" rx="2" fill="#fbfaf8" stroke="#111" stroke-width="1.4"/><rect x="732.5" y="389.5" width="11" height="11" fill="#c2dced"/><circle cx="846.7" cy="395.1" r="3.3" fill="none" stroke="#cdcdcd" stroke-width="1.1"/><rect x="671.5" y="403.75" width="196" height="16.6" fill="#4f4f4f"/><rect x="671.5" y="420.35" width="196" height="0.9" fill="#5b5b5b"/><rect x="688.3" y="403.75" width="0.8" height="16.6" fill="#585858"/><rect x="838.5" y="403.75" width="0.8" height="16.6" fill="#585858"/><path d="M673.9,412.4 Q679.2,406.4 684.5,412.4 Q679.2,418.4 673.9,412.4 Z" fill="#cfcfcf"/><circle cx="679.2" cy="412.4" r="2.1" fill="#4f4f4f"/><circle cx="679.2" cy="412.4" r="0.8" fill="#cfcfcf"/><path d="M694.6,411.9 v-2 a2.4,2.4 0 0 1 4.8,0 v2" fill="none" stroke="#cfcfcf" stroke-width="1.2"/><rect x="693.5" y="411.9" width="7" height="5" fill="#cfcfcf"/><rect x="696.4" y="413.6" width="1.2" height="1.8" fill="#535353"/><rect x="706.3" y="404.35" width="3.6" height="15.6" fill="#5a78d8"/><path d="M716.5,409.4 L720.0,412.4 L716.5,415.4" fill="none" stroke="#d0d0d0" stroke-width="1.3"/><rect x="730.7" y="404.9" width="14.6" height="14.6" rx="2" fill="#fbfaf8" stroke="#111" stroke-width="1.4"/><g fill="#b8b8b8"><circle cx="734.7" cy="414.8" r="0.7"/><circle cx="737.7" cy="411.8" r="0.7"/><circle cx="741.7" cy="408.2" r="0.6"/></g><circle cx="846.7" cy="412.4" r="3.3" fill="none" stroke="#cdcdcd" stroke-width="1.1"/><rect x="671.5" y="421.00" width="196" height="16.6" fill="#4f4f4f"/><rect x="671.5" y="437.60" width="196" height="0.9" fill="#5b5b5b"/><rect x="688.3" y="421.00" width="0.8" height="16.6" fill="#585858"/><rect x="838.5" y="421.00" width="0.8" height="16.6" fill="#585858"/><path d="M673.9,429.6 Q679.2,423.6 684.5,429.6 Q679.2,435.6 673.9,429.6 Z" fill="#cfcfcf"/><circle cx="679.2" cy="429.6" r="2.1" fill="#4f4f4f"/><circle cx="679.2" cy="429.6" r="0.8" fill="#cfcfcf"/><path d="M694.6,429.1 v-2 a2.4,2.4 0 0 1 4.8,0 v2" fill="none" stroke="#cfcfcf" stroke-width="1.2"/><rect x="693.5" y="429.1" width="7" height="5" fill="#cfcfcf"/><rect x="696.4" y="430.8" width="1.2" height="1.8" fill="#535353"/><rect x="706.3" y="421.60" width="3.6" height="15.6" fill="#d83040"/><path d="M716.5,426.6 L720.0,429.6 L716.5,432.6" fill="none" stroke="#d0d0d0" stroke-width="1.3"/><rect x="730.7" y="422.2" width="14.6" height="14.6" rx="2" fill="#fbfaf8" stroke="#111" stroke-width="1.4"/><path d="M735.7,426.0 l3,-2 v8 l-3,-2 z" fill="#8898d0"/><circle cx="846.7" cy="429.6" r="3.3" fill="none" stroke="#cdcdcd" stroke-width="1.1"/>
<rect x="667" y="634" width="203" height="14" fill="#535353"/>
</svg>
<div class="t" style="left:749.3px;top:79.4px;font-size:10.7px;color:#dfe6ee">圈</div><div class="t" style="left:768.2px;top:96.7px;font-size:10.7px;color:#dcdcdc">&lt;椭圆&gt;</div><div class="t" style="left:768.2px;top:113.9px;font-size:10.7px;color:#dcdcdc">&lt;椭圆&gt;</div><div class="t" style="left:768.2px;top:131.2px;font-size:10.7px;color:#dcdcdc">&lt;椭圆&gt;</div><div class="t" style="left:768.2px;top:148.4px;font-size:10.7px;color:#dcdcdc">&lt;椭圆&gt;</div><div class="t" style="left:768.2px;top:165.7px;font-size:10.7px;color:#dcdcdc">&lt;椭圆&gt;</div><div class="t" style="left:768.2px;top:182.9px;font-size:10.7px;color:#dcdcdc">&lt;椭圆&gt;</div><div class="t" style="left:749.3px;top:200.2px;font-size:10.7px;color:#dcdcdc">纹路</div><div class="t" style="left:749.3px;top:217.4px;font-size:10.7px;color:#dcdcdc">墙砖</div><div class="t" style="left:749.3px;top:234.7px;font-size:10.7px;color:#dcdcdc">门窗</div><div class="t" style="left:749.3px;top:251.9px;font-size:10.7px;color:#dcdcdc">符号2</div><div class="t" style="left:749.3px;top:269.1px;font-size:10.7px;color:#dcdcdc">符号</div><div class="t" style="left:749.3px;top:286.4px;font-size:10.7px;color:#dcdcdc">悬浮块</div><div class="t" style="left:749.3px;top:303.6px;font-size:10.7px;color:#dcdcdc">亭子悬浮</div><div class="t" style="left:749.3px;top:320.9px;font-size:10.7px;color:#dcdcdc">亭子</div><div class="t" style="left:749.3px;top:338.1px;font-size:10.7px;color:#dcdcdc">建筑整体</div><div class="t" style="left:749.3px;top:355.4px;font-size:10.7px;color:#dcdcdc">零碎板</div><div class="t" style="left:749.3px;top:372.6px;font-size:10.7px;color:#dcdcdc">底板</div><div class="t" style="left:749.3px;top:389.9px;font-size:10.7px;color:#dcdcdc">背景</div><div class="t" style="left:749.3px;top:407.1px;font-size:10.7px;color:#dcdcdc">参考线</div><div class="t" style="left:749.3px;top:424.4px;font-size:10.7px;color:#dcdcdc">参考</div>
<div class="t" style="left:674px;top:48.5px;font-size:9.2px;line-height:21px;color:#c8c8c8">属性</div>
<div class="t" style="left:700.5px;top:48.5px;font-size:9.2px;line-height:21px;color:#f0f0f0">图层</div>
<div class="t" style="left:732px;top:48.5px;font-size:9.2px;line-height:21px;color:#c8c8c8">库</div>
<div class="t" style="left:758.4px;top:48.5px;font-size:9.2px;line-height:21px;color:#c8c8c8">渐变</div>
<div class="t" style="left:785px;top:48.5px;font-size:9.2px;line-height:21px;color:#c8c8c8">颜色</div>
<div class="t" style="left:811.3px;top:48.5px;font-size:9.2px;line-height:21px;color:#c8c8c8">颜色参</div>


<div class="a" style="left:0;top:637px;width:651px;height:11px;background:#434343"></div>
<div class="a" style="left:315px;top:638.7px;width:20.3px;height:9px;border-radius:5px 5px 0 0;background:#5a5a5a"></div>
<div class="a" style="left:0;top:637px;width:651px;height:1.2px;background:#383838"></div>
<div class="a" style="left:0;top:646.5px;width:833px;height:1.5px;background:#6a6a6a"></div>
<div class="t" style="left:-2px;top:640.5px;font-size:11px;color:#d0d0d0">择</div>
<div class="a" style="left:63px;top:637px;width:1px;height:11px;background:#3a3a3a"></div>
<svg width="870" height="648" style="position:absolute;left:0;top:0">
<path d="M68.5,643 l4.5,3 l-4.5,3 z" fill="#cfcfcf"/>
<path d="M86,642 l-2.5,2.5 l2.5,2.5" fill="none" stroke="#999" stroke-width="1"/>
<path d="M642.2,641.5 L645.2,644.0 L642.2,646.5" fill="none" stroke="#888" stroke-width="1.0"/>
<path d="M655.0,628.5 L658.0,631.5 L661.0,628.5" fill="none" stroke="#8a8a8a" stroke-width="1.2"/>
<g fill="none" stroke="#bdbdbd" stroke-width="1.1">
<path d="M735,637 v9 h9 v-3 M739,641 l6,-5 M741.5,636 h3.5 v3.5"/>
<circle cx="761.5" cy="640" r="3" stroke="#777"/><path d="M759.5,642 l-3,3.5" stroke="#777"/>
<rect x="777" y="637.5" width="7" height="7"/><rect x="779.5" y="640" width="5" height="5" fill="#bdbdbd"/>
<path d="M797,637.5 v4 h4 M799,639.5 l2,2 l-2,2"/><rect x="801.5" y="639" width="6" height="7" fill="#bdbdbd"/>
<path d="M819.5,645.5 h8 v-8 z" fill="#bdbdbd"/><rect x="820" y="638" width="7.5" height="7.5"/>
<path d="M840.5,638.5 h9 M843,638.5 v-1.5 h4 v1.5 M841.5,639.5 v7 h7 v-7 M844,641 v4 M846,641 v4"/>
</g>
<g opacity="0.38" fill="#3f6da5">
<path d="M755,595.5 a10.5,10.5 0 0 0 -7,18.5 v4 h14 v-4 a10.5,10.5 0 0 0 -7,-18.5 z" fill="none" stroke="#3f6da5" stroke-width="2.6"/>
<rect x="750" y="620" width="10" height="2"/><rect x="750.5" y="623.5" width="9" height="2"/><rect x="752" y="627" width="6" height="2"/>
<path d="M752,603 h6 M755,603 v10" stroke="#3f6da5" stroke-width="2" fill="none"/>
<path d="M777.3,600.3 v12 a5,5 0 0 0 14,0 v-12" fill="none" stroke="#3f6da5" stroke-width="3.8"/>
<path d="M816.4,600.3 v12 a5,5 0 0 0 13.6,0 v-12" fill="none" stroke="#3f6da5" stroke-width="3.8"/>
<rect x="795.2" y="600.3" width="3.6" height="17.9"/><rect x="802.4" y="600.3" width="3.6" height="17.9"/><rect x="809.2" y="600.3" width="3.6" height="17.9"/>
<rect x="834.7" y="600.3" width="3.8" height="17.9"/><rect x="841.5" y="600.3" width="3.8" height="17.9"/><rect x="848.3" y="600.3" width="3.8" height="17.9"/>
<rect x="777" y="621.5" width="75" height="2" opacity="0.5"/>
</g>
</svg>
<div class="t" style="left:672px;top:637.5px;font-size:11px;color:#d6d6d6">15...</div>

</body></html>
